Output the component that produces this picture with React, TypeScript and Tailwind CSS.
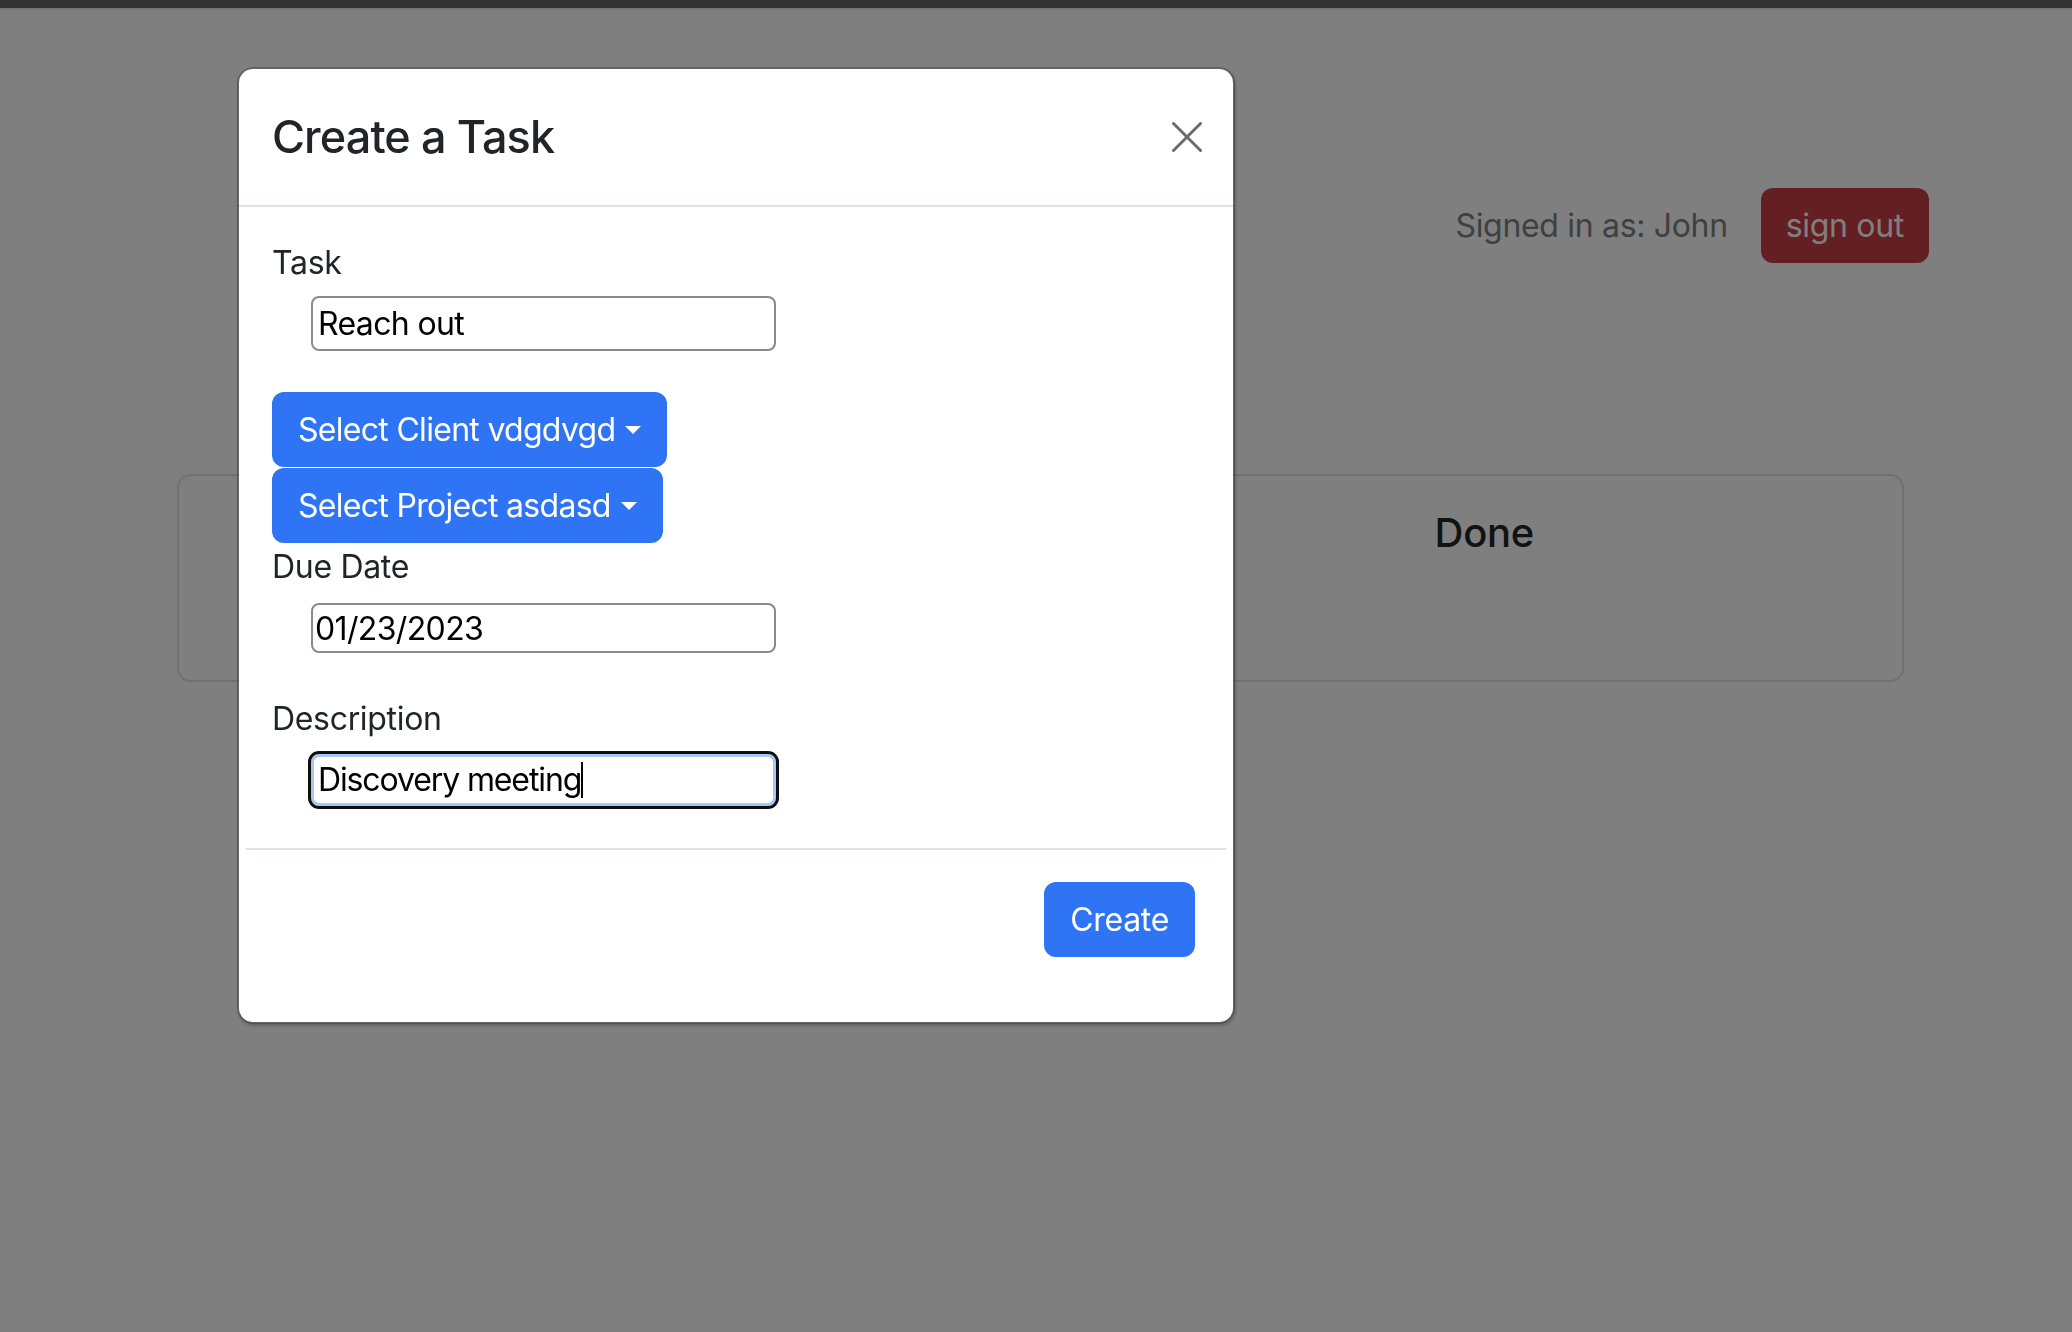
function Caret() {
  return (
    <span className="ml-[10px] inline-block h-0 w-0 border-x-[8px] border-t-[8px] border-x-transparent border-t-white" />
  );
}

function DropButton({ label }: { label: string }) {
  return (
    <button className="flex h-[75px] items-center rounded-[12px] bg-[#2f74f4] px-[26px] text-[32px] leading-[48px] tracking-[-0.022em] text-white">
      <span>{label}</span>
      <Caret />
    </button>
  );
}

function Field({ value, h, pad }: { value: string; h: string; pad: string }) {
  return (
    <input
      readOnly
      value={value}
      className={`ml-[39px] block w-[465px] ${h} ${pad} rounded-[8px] border-2 border-[#8a8a8a] bg-white text-[32px] tracking-[-0.02em] text-black outline-none`}
    />
  );
}

function CloseIcon() {
  return (
    <svg width="30" height="30" viewBox="0 0 30 30" fill="none" stroke="#6c6c6c" strokeWidth="3" strokeLinecap="round">
      <line x1="1.5" y1="1.5" x2="28.5" y2="28.5" />
      <line x1="28.5" y1="1.5" x2="1.5" y2="28.5" />
    </svg>
  );
}

export default function App() {
  return (
    <div className="relative min-h-screen w-full overflow-hidden bg-white font-['Inter','Noto_Sans',sans-serif] tracking-[-0.02em] text-[#212529]">
      {/* page behind the modal */}
      <div className="h-[8px] bg-[#666666]" />
      <div className="h-[2px] bg-[#eeeeee]" />
      <div className="flex items-center justify-end gap-[33px] pr-[143px] pt-[178px]">
        <span className="text-[32px] text-[#808080]">Signed in as: John</span>
        <button className="h-[75px] rounded-[12px] bg-[#c63f45] px-[25px] text-[32px] text-white">
          sign out
        </button>
      </div>
      <div className="ml-[177px] mr-[168px] mt-[211px] grid h-[208px] grid-cols-2 rounded-[14px] border-2 border-[#dee2e6] pt-[33px]">
        <div className="text-center text-[40px] font-medium leading-[48px]">To Do</div>
        <div className="pl-[26px] text-center text-[40px] font-medium leading-[48px]">Done</div>
      </div>

      {/* backdrop */}
      <div className="fixed inset-0 bg-black/50" />

      {/* modal */}
      <div className="absolute left-[237px] top-[67px] w-[998px] rounded-[16px] border-2 border-black/20 bg-white bg-clip-padding shadow-[1px_2px_3px_rgba(0,0,0,0.2)]">
        <div className="flex items-center justify-between border-b-2 border-[#dee2e6] py-[32px] pl-[33px] pr-[31px]">
          <h4 className="text-[45px] font-medium leading-[72px] tracking-[-0.02em]">Create a Task</h4>
          <button aria-label="Close" className="flex h-[30px] w-[30px] items-center justify-center">
            <CloseIcon />
          </button>
        </div>

        <div className="px-[33px] pb-[42px] pt-[32px]">
          <div className="text-[32px] leading-[48px]">Task</div>
          <div className="mt-[9px]">
            <Field value="Reach out" h="h-[55px]" pad="pl-[5px]" />
          </div>

          <div className="mt-[41px] flex flex-col items-start gap-[1px]">
            <DropButton label="Select Client vdgdvgd" />
            <DropButton label="Select Project asdasd" />
          </div>

          <div className="text-[32px] leading-[48px]">Due Date</div>
          <div className="mt-[12px]">
            <Field value="01/23/2023" h="h-[50px]" pad="pl-[2px]" />
          </div>

          <div className="mt-[42px] text-[32px] leading-[48px]">Description</div>
          <div className="mt-[11px]">
            <div
              role="textbox"
              className="ml-[39px] flex h-[52px] w-[465px] items-center rounded-[8px] border-[3px] border-[#a6c8f8] pl-[4px] text-[32px] tracking-[-0.035em] text-black outline-[3px] outline-[#0f0f0f] outline-solid"
            >
              <span>Discovery meeting</span>
              <span className="h-[36px] w-[2px] bg-black" />
            </div>
          </div>
        </div>

        <div className="mx-[7px] h-[2px] bg-[#dee2e6]" />

        <div className="flex justify-end pb-[65px] pr-[38px] pt-[32px]">
          <button className="h-[75px] rounded-[12px] bg-[#2f74f4] px-[26px] text-[32px] text-white">
            Create
          </button>
        </div>
      </div>
    </div>
  );
}
